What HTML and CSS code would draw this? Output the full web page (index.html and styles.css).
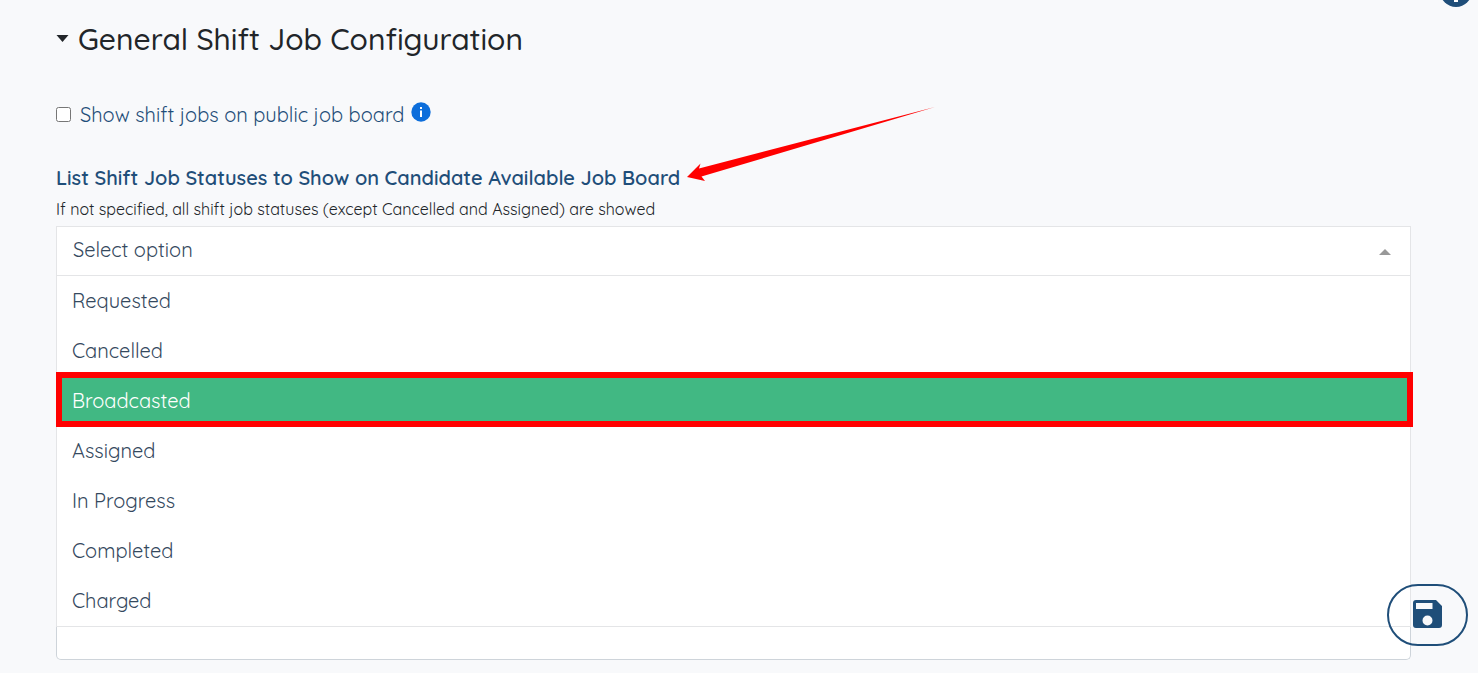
FILE: index.html
```html
<!DOCTYPE html>
<html lang="en">
<head>
<meta charset="utf-8">
<meta name="viewport" content="width=device-width, initial-scale=1">
<title>General Shift Job Configuration</title>
<link rel="stylesheet" href="styles.css">
</head>
<body>
<main class="page">
  <h2 class="section-title">
    <svg class="caret" viewBox="0 0 12 7" aria-hidden="true"><path d="M0 0H12L6 7Z"/></svg>
    General Shift Job Configuration
  </h2>

  <div class="check-row">
    <input class="check" type="checkbox" id="public-board">
    <label class="check-label" for="public-board">Show shift jobs on public job board</label>
    <svg class="info" viewBox="0 0 20 20" role="img" aria-label="Information">
      <circle cx="10" cy="10" r="9.7" fill="#0d6edb"/>
      <path d="M9 5h2v2H9zM9 8.500h2V15H9z" fill="#fff"/>
    </svg>
  </div>

  <div class="field">
    <div class="field-head">
      <label class="field-label" id="status-label" for="status">List Shift Job Statuses to Show on Candidate Available Job Board</label>
      <svg class="arrow" viewBox="0 0 250 76" aria-hidden="true"><path d="M0 71 13.500 57.500 12 62.500 248 1 14.500 70.500 18 75Z"/></svg>
    </div>
    <p class="hint">If not specified, all shift job statuses (except Cancelled and Assigned) are showed</p>
    <button class="select" id="status" type="button" role="combobox" aria-expanded="true" aria-controls="status-list">
      <span>Select option</span>
      <svg class="select-caret" viewBox="0 0 12 6" aria-hidden="true"><path d="M0 6H12L6 0Z"/></svg>
    </button>
    <ul class="options" id="status-list" role="listbox" aria-labelledby="status-label">
      <li class="option" role="option">Requested</li>
      <li class="option" role="option">Cancelled</li>
      <li class="option option-active" role="option">Broadcasted</li>
      <li class="option" role="option">Assigned</li>
      <li class="option" role="option">In Progress</li>
      <li class="option" role="option">Completed</li>
      <li class="option" role="option">Charged</li>
    </ul>
    <input class="text-box" type="text" aria-label="Additional value">
  </div>
</main>

<button class="help" type="button" aria-label="Help">
  <svg viewBox="0 0 32 32" aria-hidden="true"><circle cx="16" cy="16" r="16" fill="#1f4e79"/><path d="M14 7h4v20h-4z" fill="#fff"/></svg>
</button>
<button class="save" type="button" aria-label="Save">
  <svg class="save-icon" viewBox="0 0 29 28" aria-hidden="true">
    <path fill-rule="evenodd" d="M3 0H23L29 6V25a3 3 0 0 1-3 3H3a3 3 0 0 1-3-3V3a3 3 0 0 1 3-3ZM3 3V9H19.500V3ZM14.500 15.500a5 5 0 1 0 0 10 5 5 0 0 0 0-10Z"/>
  </svg>
</button>
</body>
</html>
```
FILE: styles.css
```css
* {
  box-sizing: border-box;
}

body {
  margin: 0;
  background: #f8f9fb;
  color: #212529;
  font-family: Quicksand, Lato, sans-serif;
  font-size: 20px;
  line-height: 30px;
  overflow: hidden;
}

.page {
  padding: 19px 67px 13px 56px;
}

.section-title {
  display: flex;
  align-items: center;
  gap: 9px;
  margin: 0 0 41px;
  font-size: 30px;
  line-height: 40px;
  font-weight: 500;
}

.caret {
  width: 13px;
  height: 7px;
  margin-bottom: 2px;
  fill: #212529;
}

.check-row {
  display: flex;
  align-items: center;
  margin-bottom: 33px;
  color: #1f4e79;
}

.check {
  width: 15px;
  height: 15px;
  margin: 0 9px 2px 0;
}

.info {
  width: 20px;
  height: 20px;
  margin: 0 0 6px 7px;
}

.field-head {
  position: relative;
  width: max-content;
}

.field-label {
  color: #1f4e79;
  font-weight: 600;
}

.arrow {
  position: absolute;
  left: calc(100% + 7px);
  bottom: 11px;
  width: 250px;
  height: 76px;
  fill: #f00;
}

.hint {
  margin: 6px 0;
  font-size: 16px;
  line-height: 21px;
}

.select {
  display: flex;
  align-items: center;
  justify-content: space-between;
  width: 100%;
  height: 50px;
  padding: 0 19px 2px 16px;
  border: 1px solid #e4e5e7;
  background: #fff;
  color: #35495e;
  font: inherit;
}

.select-caret {
  width: 12px;
  height: 6px;
  margin-top: 3px;
  fill: #999;
}

.options {
  margin: 0;
  padding: 0;
  list-style: none;
  background: #fff;
  border: solid #e4e5e7;
  border-width: 0 1px 1px;
}

.option {
  padding: 10px 15px;
  color: #35495e;
}

.option-active {
  position: relative;
  background: #41b883;
  color: #fff;
}

.option-active::after {
  content: "";
  position: absolute;
  inset: -4px -3px -1px -1px;
  border: 6px solid #f00;
}

.text-box {
  display: block;
  width: 100%;
  height: 33px;
  border: 1px solid #ced4da;
  border-top: 0;
  border-radius: 0 0 5px 5px;
  background: #fff;
}

.help,
.save {
  position: fixed;
  padding: 0;
  border: 0;
}

.help {
  top: -25px;
  right: 6px;
  width: 32px;
  height: 32px;
  background: none;
}

.save {
  right: 10px;
  bottom: 27px;
  display: grid;
  place-items: center;
  width: 81px;
  height: 62px;
  border: 2px solid #1f4e79;
  border-radius: 31px;
  background: none;
}

.save-icon {
  width: 29px;
  height: 28px;
  margin-bottom: 2px;
  fill: #1f4e79;
}
```
